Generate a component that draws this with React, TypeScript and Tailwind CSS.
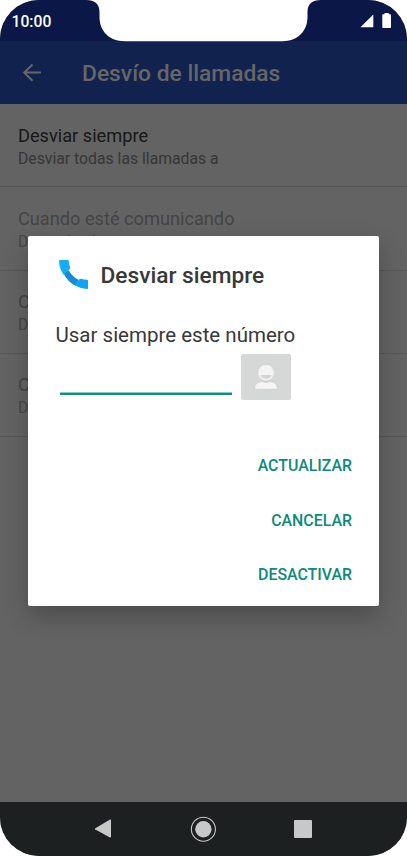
import React from 'react';

type Option = { title: string; detail: string; enabled: boolean };

const options: Option[] = [
  { title: 'Desviar siempre', detail: 'Desviar todas las llamadas a', enabled: true },
  { title: 'Cuando esté comunicando', detail: 'Desactivado', enabled: false },
  { title: 'C', detail: 'D', enabled: false },
  { title: 'C', detail: 'D', enabled: false },
];

function StatusBar() {
  return (
    <div className="relative flex h-[41px] shrink-0 justify-between bg-[#0a1747] pl-[11.5px] pr-[15px] text-white">
      <span className="mt-[10px] text-[15.700px] font-medium leading-6">10:00</span>
      <svg className="absolute left-0 top-0" width="407" height="42" viewBox="0 0 407 42">
        <path d="M86 0C95 0 99.500 4 99.500 12V17C99.500 31 109 41.200 125 41.200H282C298 41.200 307.500 31 307.500 17V12C307.500 4 312 0 321 0Z" fill="#fff" />
      </svg>
      <svg className="mt-[13px]" width="32" height="16" viewBox="0 0 32 16" fill="#fff">
        <path d="M.5 14.300L13.300 1.500V14.300Z" />
        <path d="M22.900 1.200H24.500V0H28.800V1.200H30.400Q31 1.200 31 1.900V14.200Q31 14.900 30.400 14.900H22.900Q22.300 14.900 22.300 14.200V1.900Q22.300 1.200 22.900 1.200Z" />
      </svg>
    </div>
  );
}

function AppBar() {
  return (
    <header className="flex h-[63px] shrink-0 items-center bg-[#12224e] pl-[22px] text-[#666]">
      <svg width="20" height="18" viewBox="0 0 20 18" fill="none" stroke="currentColor" strokeWidth="2">
        <path d="M10.500 .5L2.200 8.600L10.500 16.700M2.200 8.600H19" />
      </svg>
      <h1 className="ml-[40px] mt-[2px] whitespace-nowrap text-[22.800px] font-medium leading-7">Desvío de llamadas</h1>
    </header>
  );
}

function OptionRow({ title, detail, enabled }: Option) {
  return (
    <li className={`h-[83.300px] whitespace-nowrap border-b border-[#555] pl-[18px] pt-[19.550px] ${enabled ? 'text-[#171717]' : 'text-[#444]'}`}>
      <div className="text-[18.200px] leading-6">{title}</div>
      <div className={`text-[15.750px] leading-[22px] ${enabled ? 'text-[#363636]' : 'text-[#474747]'}`}>{detail}</div>
    </li>
  );
}

function PhoneIcon() {
  return (
    <svg width="30" height="30" viewBox="0 0 30 30">
      <path d="M4 12.500Q8.500 22 17 26L19.500 19.800Q13.500 17 9.800 10.500Z" fill="#168bd3" />
      <path d="M1 0H9Q9.700 0 9.800 1Q9.900 4.500 11.200 7.700Q11.400 8.500 10.900 9.100L4.500 14.800Q0 7.500 0 1.200Q0 0 1 0Z" fill="#15adf6" />
      <path d="M15 24.600L20.500 19.200Q21.200 18.500 22 18.700Q25 19.500 28 19.700Q29 19.800 29 20.700V28Q29 29 28 29Q21 28.700 15 24.600Z" fill="#0aa5f6" />
    </svg>
  );
}

function ContactIcon() {
  return (
    <svg width="26" height="28" viewBox="0 0 26 28">
      <path d="M1.500 26.200Q1.500 19 9 18.500Q13 20.500 17 18.500Q24.500 19 24.500 26.200Z" fill="#f5f5f5" stroke="#c8c9c8" strokeWidth=".6" />
      <circle cx="13" cy="9.700" r="8.300" fill="#f4f4f4" stroke="#c8c9c8" strokeWidth=".6" />
      <path d="M7.200 12H18.800Q17 15.800 13 15.800Q9 15.800 7.200 12Z" fill="#d2d4d3" />
    </svg>
  );
}

function ForwardDialog() {
  return (
    <section role="dialog" className="absolute left-[28px] top-[236px] flex h-[370px] w-[351px] flex-col rounded-[2px] bg-white text-[#383838] shadow-[0_10px_24px_rgba(0,0,0,0.24)]">
      <div className="flex pl-[31px] pt-[24px]">
        <PhoneIcon />
        <h2 className="ml-[11.500px] mt-[2px] whitespace-nowrap text-[22.700px] font-medium leading-7">Desviar siempre</h2>
      </div>
      <p className="ml-[27.500px] mt-[31px] whitespace-nowrap text-[20.500px] leading-7">Usar siempre este número</p>
      <div className="mt-[5px] flex items-start pl-[32px]">
        <input aria-label="Número" className="h-[41px] w-[172px] border-b-2 border-[#0f8f80] bg-transparent shadow-[0_-1px_0_#8fcac3_inset] outline-none" />
        <button aria-label="Contactos" className="ml-[9px] flex h-[46px] w-[50px] items-center justify-center rounded-[2px] bg-[#d6d8d7]">
          <ContactIcon />
        </button>
      </div>
      <div className="mt-[39.100px] flex flex-col items-end pr-[27px] text-[15.900px] font-medium text-[#0c8b7a]">
        <button className="h-[54.400px]">ACTUALIZAR</button>
        <button className="h-[54.400px]">CANCELAR</button>
        <button className="h-[54.400px]">DESACTIVAR</button>
      </div>
    </section>
  );
}

function NavigationBar() {
  return (
    <nav className="flex h-[54px] shrink-0 items-center bg-[#1c2021] pl-[94px] text-[#c7c9c8]">
      <svg width="18" height="20" viewBox="0 0 18 20" fill="currentColor"><path d="M1 9.400L16 .5Q17 .2 17 1.400V17.500Q17 18.800 16 18.500L1 10.200Q.5 9.800 1 9.400Z" /></svg>
      <svg className="ml-[78px]" width="27" height="27" viewBox="0 0 27 27"><circle cx="13.400" cy="13.200" r="12" fill="none" stroke="currentColor" strokeWidth="1.100" /><circle cx="13.400" cy="13.200" r="8.200" fill="currentColor" /></svg>
      <span className="ml-[77px] h-[18px] w-[18px] rounded-[1px] bg-[#c7c9c8]" />
    </nav>
  );
}

export default function App() {
  return (
    <div className="h-[856px] w-[407px] overflow-hidden bg-white font-['Roboto',sans-serif]">
      <main className="relative flex h-[856px] w-[407px] flex-col overflow-hidden rounded-[39px] bg-[#636363]">
        <StatusBar />
        <AppBar />
        <ul className="flex-1">
          {options.map((option, index) => <OptionRow key={index} {...option} />)}
        </ul>
        <NavigationBar />
        <ForwardDialog />
      </main>
    </div>
  );
}
